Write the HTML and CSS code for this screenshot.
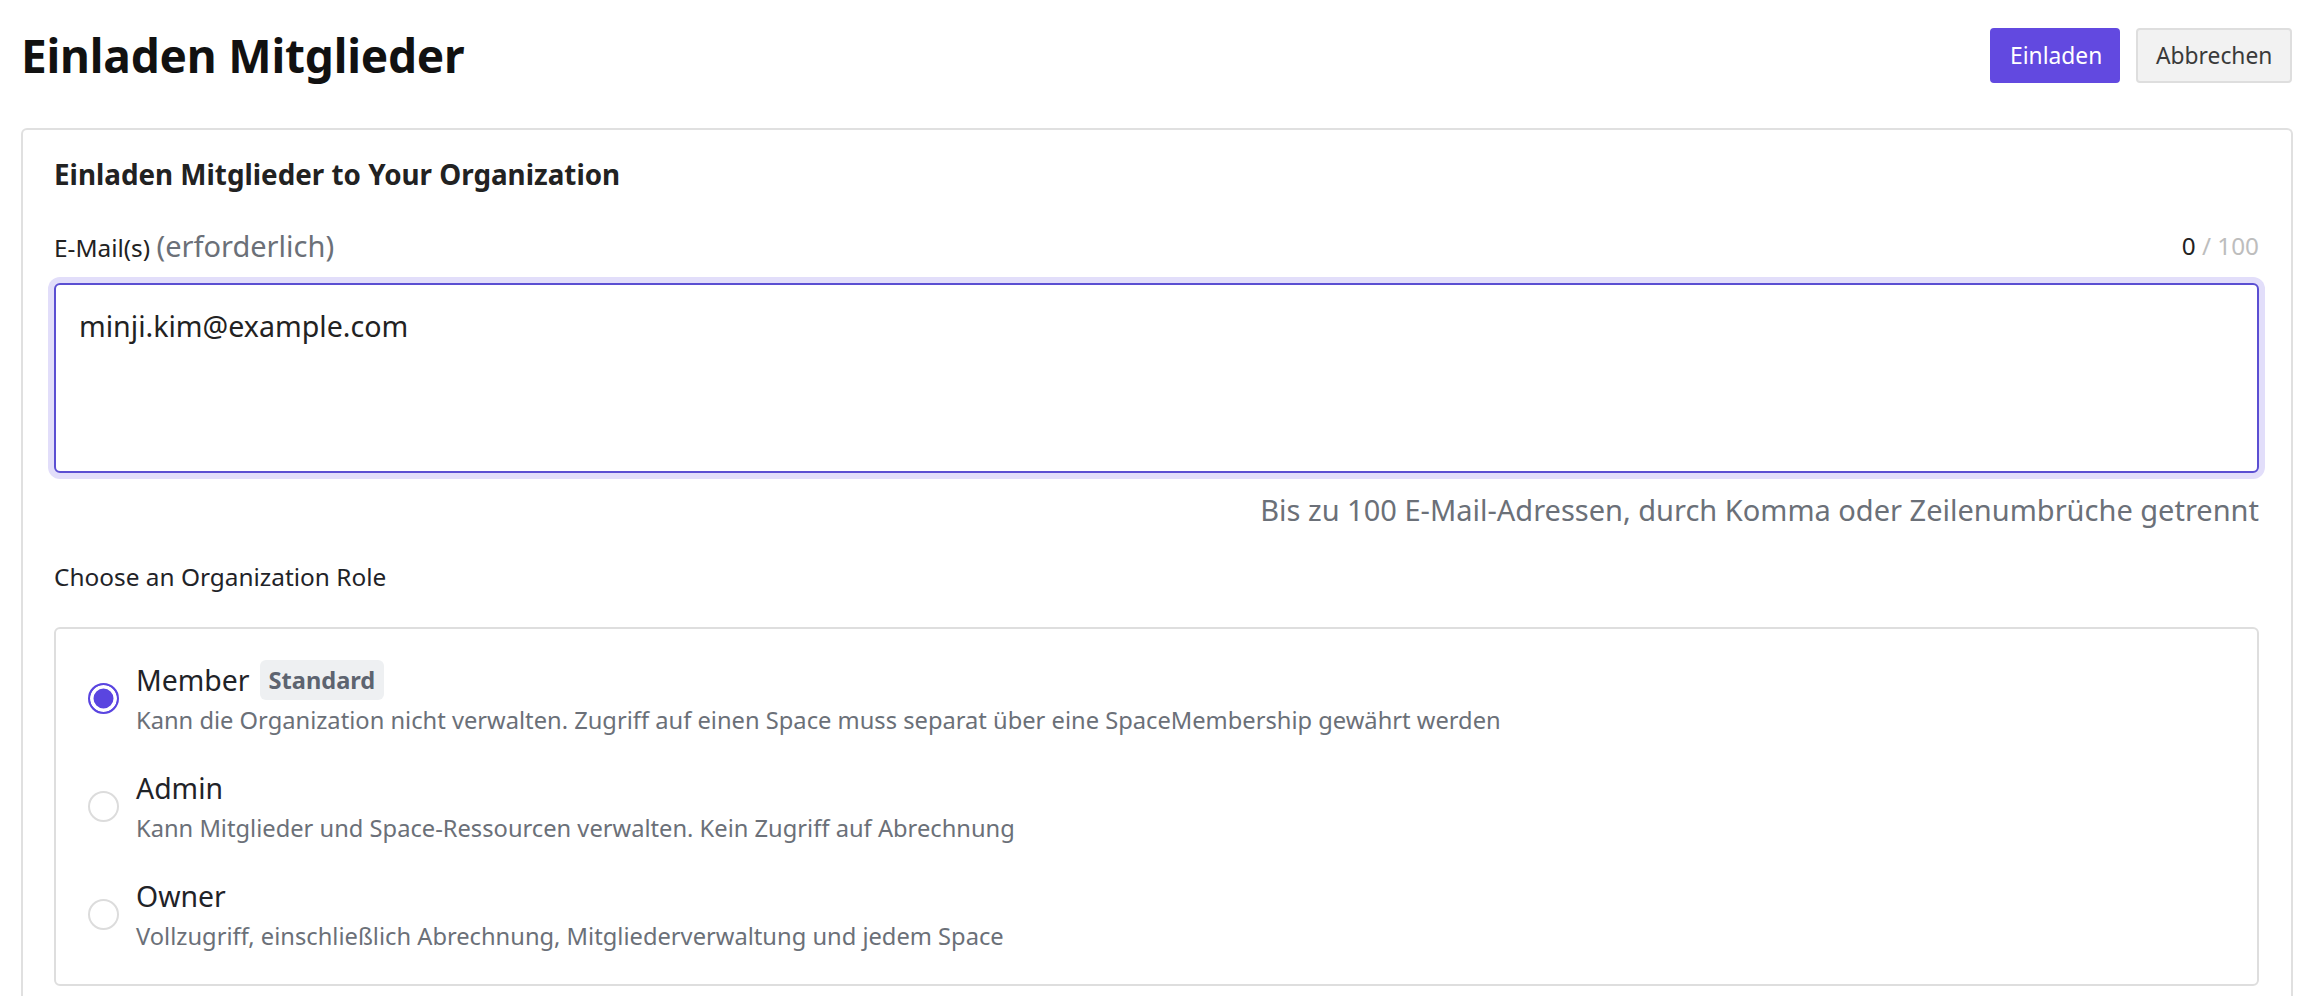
FILE: index.html
```html
<!DOCTYPE html>
<html lang="de">
<head>
<meta charset="utf-8">
<title>Einladen Mitglieder</title>
<link rel="stylesheet" href="styles.css">
</head>
<body>
<div class="page">
  <header class="page-header">
    <h1 class="page-title">Einladen Mitglieder</h1>
    <div class="actions">
      <button class="btn btn-primary" type="button">Einladen</button>
      <button class="btn btn-secondary" type="button">Abbrechen</button>
    </div>
  </header>

  <section class="card">
    <h2 class="card-title">Einladen Mitglieder to Your Organization</h2>

    <div class="field-head">
      <label class="field-label" for="emails">E-Mail(s) <span class="required">(erforderlich)</span></label>
      <div class="counter"><span class="count">0</span> <span class="max">/ 100</span></div>
    </div>
    <textarea id="emails" class="email-input">minji.kim@example.com</textarea>
    <p class="helper">Bis zu 100 E-Mail-Adressen, durch Komma oder Zeilenumbrüche getrennt</p>

    <p class="section-label">Choose an Organization Role</p>

    <div class="roles">
      <div class="role">
        <span class="radio checked"></span>
        <div class="role-text">
          <div class="role-name">Member <span class="badge">Standard</span></div>
          <div class="role-desc">Kann die Organization nicht verwalten. Zugriff auf einen Space muss separat über eine SpaceMembership gewährt werden</div>
        </div>
      </div>
      <div class="role">
        <span class="radio"></span>
        <div class="role-text">
          <div class="role-name">Admin</div>
          <div class="role-desc">Kann Mitglieder und Space-Ressourcen verwalten. Kein Zugriff auf Abrechnung</div>
        </div>
      </div>
      <div class="role">
        <span class="radio"></span>
        <div class="role-text">
          <div class="role-name">Owner</div>
          <div class="role-desc">Vollzugriff, einschließlich Abrechnung, Mitgliederverwaltung und jedem Space</div>
        </div>
      </div>
    </div>
  </section>
</div>
</body>
</html>
```

FILE: styles.css
```css
* { box-sizing: border-box; }

html, body {
  margin: 0;
  padding: 0;
  background: #ffffff;
}

body {
  font-family: "Noto Sans", "Open Sans", "Liberation Sans", sans-serif;
  color: #1f2328;
  font-size: 22.4px;
}

.page {
  padding: 28px 24px 0 21px;
}

.page-header {
  display: flex;
  align-items: center;
  justify-content: space-between;
  height: 55px;
  margin-bottom: 45px;
}

.page-title {
  margin: 0;
  font-size: 46px;
  font-weight: 700;
  line-height: 55px;
  color: #111111;
  letter-spacing: -0.2px;
}

.actions {
  display: flex;
  gap: 16px;
}

.btn {
  height: 55px;
  padding: 0 18px;
  font-family: inherit;
  font-size: 22.8px;
  border-radius: 4px;
  cursor: pointer;
}

.btn-primary {
  background: #6249e0;
  border: 2px solid #6249e0;
  color: #ffffff;
  width: 130px;
}

.btn-secondary {
  background: #f2f2f2;
  border: 2px solid #dedede;
  color: #3a3a3a;
  width: 156px;
}

.card {
  border: 2px solid #e0e0e0;
  border-bottom: none;
  border-radius: 6px 6px 0 0;
  padding: 24px 32px 40px 31px;
  margin-right: -1px;
}

.card-title {
  margin: 0 0 31px 0;
  font-size: 27.8px;
  font-weight: 700;
  line-height: 40px;
  color: #222222;
}

.field-head {
  display: flex;
  align-items: center;
  justify-content: space-between;
  height: 40px;
  margin-bottom: 18px;
}

.field-label {
  font-size: 24.4px;
  color: #222222;
}

.required {
  font-size: 29px;
  color: #6b7078;
}

.counter {
  font-size: 24.3px;
  color: #222222;
}

.counter .max {
  color: #bdbdbd;
}

.email-input {
  display: block;
  width: 100%;
  height: 190px;
  padding: 20px 23px;
  font-family: inherit;
  font-size: 28.6px;
  line-height: 42px;
  color: #222222;
  border: 2.5px solid #5b4fd2;
  border-radius: 6px;
  box-shadow: 0 0 0 6px #e2defa;
  outline: none;
  resize: none;
  background: #ffffff;
}

.helper {
  margin: 17px 0 0 0;
  text-align: right;
  font-size: 29px;
  line-height: 40px;
  color: #6b7078;
}

.section-label {
  margin: 30px 0 33px 0;
  font-size: 24.4px;
  line-height: 34px;
  color: #1f2328;
}

.roles {
  border: 2px solid #dedede;
  border-radius: 6px;
  padding: 30px 32px 31px 32px;
  display: flex;
  flex-direction: column;
  gap: 30px;
}

.role {
  display: flex;
  align-items: center;
  gap: 17px;
}

.radio {
  flex: none;
  width: 31px;
  height: 31px;
  border-radius: 50%;
  border: 2px solid #dcdcdc;
  background: #ffffff;
}

.radio.checked {
  border: 2.5px solid #5a45e0;
  background: #5a45e0;
  box-shadow: inset 0 0 0 3.5px #ffffff;
}

.role-text {
  display: flex;
  flex-direction: column;
}

.role-name {
  display: flex;
  align-items: center;
  gap: 10px;
  height: 42px;
  font-size: 28.4px;
  line-height: 42px;
  color: #1f2328;
}

.badge {
  display: inline-flex;
  align-items: center;
  height: 40px;
  padding: 0 9px;
  background: #eef0f2;
  border-radius: 6px;
  font-size: 23.6px;
  font-weight: 700;
  color: #5d6470;
}

.role-desc {
  margin-top: 2px;
  font-size: 23.7px;
  line-height: 34px;
  color: #6b7078;
}
```
